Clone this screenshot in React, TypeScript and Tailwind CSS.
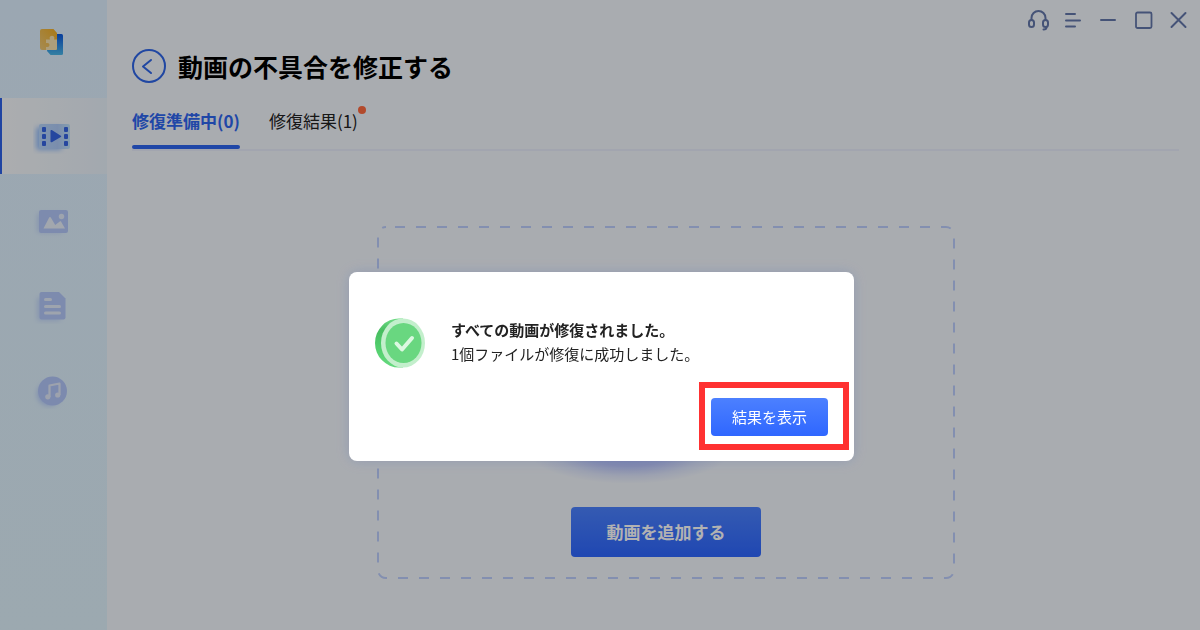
import React, { useState } from 'react';

interface NavItem {
  id: string;
  label: string;
  icon: React.ReactNode;
}

const Logo = () => (
  <svg width="24" height="28" viewBox="0 0 24 28" aria-hidden="true">
    <defs>
      <linearGradient id="logoBack" x1="0" y1="0" x2="0" y2="1">
        <stop offset="0" stopColor="#0a58e0" />
        <stop offset="1" stopColor="#4bb8ea" />
      </linearGradient>
      <linearGradient id="logoFront" x1="1" y1="0" x2="0" y2="1">
        <stop offset="0" stopColor="#f3ae22" />
        <stop offset="1" stopColor="#edc878" />
      </linearGradient>
    </defs>
    <path d="M9 6h12.500a1.500 1.500 0 0 1 1.500 1.500v18a1.500 1.500 0 0 1-1.500 1.500H10.500L7 23z" fill="url(#logoBack)" />
    <path d="M2 1h11.500L17 5v15.500a1.500 1.500 0 0 1-1.500 1.500H2a2 2 0 0 1-2-2V3a2 2 0 0 1 2-2z" fill="url(#logoFront)" />
    <path
      d="M6 11.500h4a2.400 2.400 0 1 1 4 0H17v9a1.500 1.500 0 0 1-1.500 1.500H6v-3h1.500a2 2 0 1 0 0-4H6z"
      fill="#f8e3b0"
    />
  </svg>
);

const VideoIcon = () => (
  <svg width="40" height="36" viewBox="0 0 40 36" aria-hidden="true">
    <defs>
      <filter id="videoGlow" x="-30%" y="-30%" width="160%" height="160%">
        <feGaussianBlur stdDeviation="2.5" />
      </filter>
      <linearGradient id="videoBody" x1="0" y1="0" x2="1" y2="0">
        <stop offset="0" stopColor="#b8d6fb" />
        <stop offset="0.6" stopColor="#afcbf8" />
        <stop offset="1" stopColor="#bfe2fa" />
      </linearGradient>
    </defs>
    <rect x="3" y="9" width="26" height="23" rx="3" fill="#98c0fb" filter="url(#videoGlow)" />
    <rect x="6" y="6" width="31" height="25" rx="2" fill="url(#videoBody)" />
    <g fill="#3565e4">
      <rect x="9" y="9" width="4" height="5" rx="1" />
      <rect x="9" y="16" width="4" height="5" rx="1" />
      <rect x="9" y="23" width="4" height="5" rx="1" />
      <rect x="31" y="9" width="4" height="5" rx="1" />
      <rect x="31" y="16" width="4" height="5" rx="1" />
      <rect x="31" y="23" width="4" height="5" rx="1" />
      <path d="M17.500 12.800c0-.8.700-1 1.300-.7l9 5.600c.5.300.5.900 0 1.200l-9 5.300c-.6.300-1.300 0-1.300-.7z" />
    </g>
  </svg>
);

const ImageIcon = () => (
  <svg width="40" height="36" viewBox="0 0 40 36" aria-hidden="true">
    <defs>
      <filter id="imageGlow" x="-30%" y="-30%" width="160%" height="160%">
        <feGaussianBlur stdDeviation="2.5" />
      </filter>
    </defs>
    <rect x="4" y="10" width="26" height="20" rx="3" fill="#c3d8fb" filter="url(#imageGlow)" />
    <rect x="6" y="7" width="29" height="23" rx="2" fill="#b4c8fa" />
    <path d="M10.500 25.500l5.700-11c.4-.8 1.200-.8 1.600 0l4.400 7.500 4.600-3.600c.4-.3.900-.3 1.200.1l4 7z" fill="#e9effa" />
    <circle cx="28.500" cy="13.500" r="2.700" fill="#e2ebf9" />
  </svg>
);

const DocumentIcon = () => (
  <svg width="40" height="36" viewBox="0 0 40 36" aria-hidden="true">
    <defs>
      <filter id="docGlow" x="-30%" y="-30%" width="160%" height="160%">
        <feGaussianBlur stdDeviation="2.5" />
      </filter>
    </defs>
    <rect x="4" y="9" width="24" height="24" rx="3" fill="#c3d8fb" filter="url(#docGlow)" />
    <path d="M8.500 4H26l6.500 6.500v19a2 2 0 0 1-2 2h-22a2 2 0 0 1-2-2V6a2 2 0 0 1 2-2z" fill="#b4c8fa" />
    <g stroke="#e3ebf9" strokeWidth="3" strokeLinecap="round">
      <path d="M12.500 11.500h5" />
      <path d="M12.500 18.500h14" />
      <path d="M12.500 25h14" />
    </g>
  </svg>
);

const MusicIcon = () => (
  <svg width="40" height="36" viewBox="0 0 40 36" aria-hidden="true">
    <defs>
      <filter id="musicGlow" x="-30%" y="-30%" width="160%" height="160%">
        <feGaussianBlur stdDeviation="2.5" />
      </filter>
    </defs>
    <circle cx="16" cy="21" r="12" fill="#b8cffb" filter="url(#musicGlow)" />
    <circle cx="19.500" cy="18" r="14.500" fill="#b2c6fa" />
    <path d="M16.500 24V12.500l10-2V22" fill="none" stroke="#e1e9f8" strokeWidth="2.200" strokeLinejoin="round" />
    <circle cx="14.800" cy="23.800" r="2.600" fill="#e1e9f8" />
    <circle cx="24.700" cy="22" r="2.600" fill="#e1e9f8" />
  </svg>
);

const SuccessIcon = () => (
  <svg className="shrink-0" width="50" height="50" viewBox="0 0 50 50" aria-hidden="true">
    <defs>
      <linearGradient id="coinEdge" x1="0" y1="0" x2="0" y2="1">
        <stop offset="0" stopColor="#6fdc86" />
        <stop offset="0.25" stopColor="#47bd60" />
        <stop offset="0.6" stopColor="#52cf6d" />
        <stop offset="1" stopColor="#66d97f" />
      </linearGradient>
    </defs>
    <path d="M24 .500h4v49h-4a24 24.500 0 0 1 0-49z" fill="url(#coinEdge)" />
    <ellipse cx="28" cy="25" rx="22" ry="24.500" fill="#c3efcc" />
    <ellipse cx="28.500" cy="25" rx="18" ry="20" fill="#69d780" />
    <path d="M21.500 25.500l5.500 6 10-11.500" fill="none" stroke="#dcf8e1" strokeWidth="4" strokeLinecap="round" strokeLinejoin="round" />
  </svg>
);

const navItems: NavItem[] = [
  { id: 'video', label: '動画', icon: <VideoIcon /> },
  { id: 'image', label: '画像', icon: <ImageIcon /> },
  { id: 'document', label: 'ドキュメント', icon: <DocumentIcon /> },
  { id: 'audio', label: '音声', icon: <MusicIcon /> },
];

const Sidebar = () => (
  <aside className="w-[107px] shrink-0 bg-linear-to-b from-[#dff0ff] to-[#e0f2fd]">
    <div className="flex h-[98px] items-start justify-center pt-7 pr-1">
      <Logo />
    </div>
    <nav className="flex flex-col gap-[9px]">
      {navItems.map(item => (
        <button
          key={item.id}
          type="button"
          aria-label={item.label}
          className={
            item.id === 'video'
              ? 'flex h-[76px] items-center justify-center border-l-2 border-[#2f62e8] bg-linear-to-r from-[#f6f8fb] to-[#e9f2fb] pr-1'
              : 'flex h-[76px] items-center justify-center pr-px'
          }
        >
          {item.icon}
        </button>
      ))}
    </nav>
  </aside>
);

const WindowControls = () => (
  <div className="flex h-10 items-center justify-end gap-3 pr-2.5 text-[#6478ab]">
    <button type="button" aria-label="サポート">
      <svg width="23" height="24" viewBox="0 0 23 24" fill="none" stroke="currentColor" strokeWidth="2" strokeLinecap="round">
        <path d="M4.500 12V10a7 7 0 0 1 14 0v2" />
        <rect x="2" y="12" width="5" height="7" rx="2.500" />
        <rect x="16" y="12" width="5" height="7" rx="2.500" />
        <path d="M19.500 19c0 1.600-1 2.500-3 2.500" />
      </svg>
    </button>
    <button type="button" aria-label="メニュー">
      <svg width="23" height="24" viewBox="0 0 23 24" fill="none" stroke="currentColor" strokeWidth="2" strokeLinecap="round">
        <path d="M4 6h9M4 12.500h14M4 18.500h9" />
      </svg>
    </button>
    <button type="button" aria-label="最小化">
      <svg width="23" height="24" viewBox="0 0 23 24" fill="none" stroke="currentColor" strokeWidth="2" strokeLinecap="round">
        <path d="M4 12h14" />
      </svg>
    </button>
    <button type="button" aria-label="最大化">
      <svg width="23" height="24" viewBox="0 0 23 24" fill="none" stroke="currentColor" strokeWidth="1.800">
        <rect x="4" y="4.500" width="15.500" height="15.500" rx="1.500" />
      </svg>
    </button>
    <button type="button" aria-label="閉じる">
      <svg width="23" height="24" viewBox="0 0 23 24" fill="none" stroke="currentColor" strokeWidth="2" strokeLinecap="round">
        <path d="M4.500 5l14 14M18.500 5l-14 14" />
      </svg>
    </button>
  </div>
);

const App = () => {
  const [tab, setTab] = useState('ready');
  const [open, setOpen] = useState(true);

  return (
    <div className="flex min-h-screen bg-[#f3f7fd] font-['Noto_Sans_CJK_JP',sans-serif] text-[#222]">
      <Sidebar />

      <main className="flex min-w-0 flex-1 flex-col">
        <WindowControls />

        <div className="flex flex-1 flex-col pr-[21px] pl-[25px]">
          <div className="mt-[9px] flex items-center gap-3">
            <button type="button" aria-label="戻る">
              <svg width="34" height="34" viewBox="0 0 34 34" fill="none" stroke="#2f66e8" strokeWidth="2" strokeLinecap="round" strokeLinejoin="round">
                <circle cx="17" cy="17" r="16" />
                <path d="M19 11l-8 6.500 8 6.500" />
              </svg>
            </button>
            <h1 className="text-[25px] leading-[34px] font-bold text-black">動画の不具合を修正する</h1>
          </div>

          {/* Tabs */}
          <div role="tablist" className="mt-[22px] flex gap-[29px] border-b-2 border-[#e8edfb] text-[17px] leading-8">
            <button
              type="button"
              role="tab"
              aria-selected={tab === 'ready'}
              onClick={() => setTab('ready')}
              className="flex flex-col font-bold text-[#2f66f0]"
            >
              修復準備中(0)
              <span className="mt-2 h-1 w-full rounded-full bg-[#2f66f0]" />
            </button>
            <button
              type="button"
              role="tab"
              aria-selected={tab === 'result'}
              onClick={() => setTab('result')}
              className="relative flex flex-col"
            >
              修復結果(1)
              <span className="absolute top-px -right-2 size-2 rounded-full bg-[#ff6a40]" />
            </button>
          </div>

          {/* Drop zone */}
          <div className="mt-[75px] flex justify-center pl-[21px]">
            <div className="relative flex h-[353px] w-[578px] flex-col items-center justify-end pb-[22px]">
              <svg className="absolute inset-0 size-full" fill="none" aria-hidden="true">
                <defs>
                  <radialGradient id="artGlow">
                    <stop offset="0" stopColor="#a4b0fa" />
                    <stop offset="0.45" stopColor="#bcc6fb" />
                    <stop offset="0.75" stopColor="#e0e7fc" />
                    <stop offset="1" stopColor="#f3f7fd" />
                  </radialGradient>
                </defs>
                <ellipse cx="252" cy="226" rx="100" ry="32" fill="url(#artGlow)" />
                <rect x="1" y="1" width="576" height="351" rx="8" stroke="#bccdfc" strokeWidth="2" strokeDasharray="10 11" strokeDashoffset="-9" />
              </svg>
              <button
                type="button"
                className="relative h-[50px] w-[190px] rounded bg-linear-to-b from-[#4c82ff] to-[#2e66ff] text-[17px] font-bold text-white"
              >
                動画を追加する
              </button>
            </div>
          </div>
        </div>
      </main>

      {open && (
        <div className="fixed inset-0 flex items-start justify-center bg-black/30 pt-[272px] pl-[3px]">
          <div
            role="dialog"
            aria-labelledby="dialog-title"
            className="flex w-[505px] flex-col rounded-lg bg-white pb-[11px] shadow-[0_0_14px_rgba(100,120,175,0.35)]"
          >
            <div className="flex gap-[26px] pt-[46px] pl-[26px]">
              <SuccessIcon />
              <div className="text-[15px] leading-6">
                <h2 id="dialog-title" className="font-bold">すべての動画が修復されました。</h2>
                <p>1個ファイルが修復に成功しました。</p>
              </div>
            </div>
            <div className="mt-3.5 mr-[5px] self-end border-6 border-[#ff3131] pt-2.5 pr-[15px] pb-2 pl-1.5">
              <button
                type="button"
                onClick={() => setOpen(false)}
                className="block h-[38px] w-[117px] rounded bg-linear-to-b from-[#4c80ff] to-[#2f66ff] text-[15px] text-white"
              >
                結果を表示
              </button>
            </div>
          </div>
        </div>
      )}
    </div>
  );
};

export default App;
